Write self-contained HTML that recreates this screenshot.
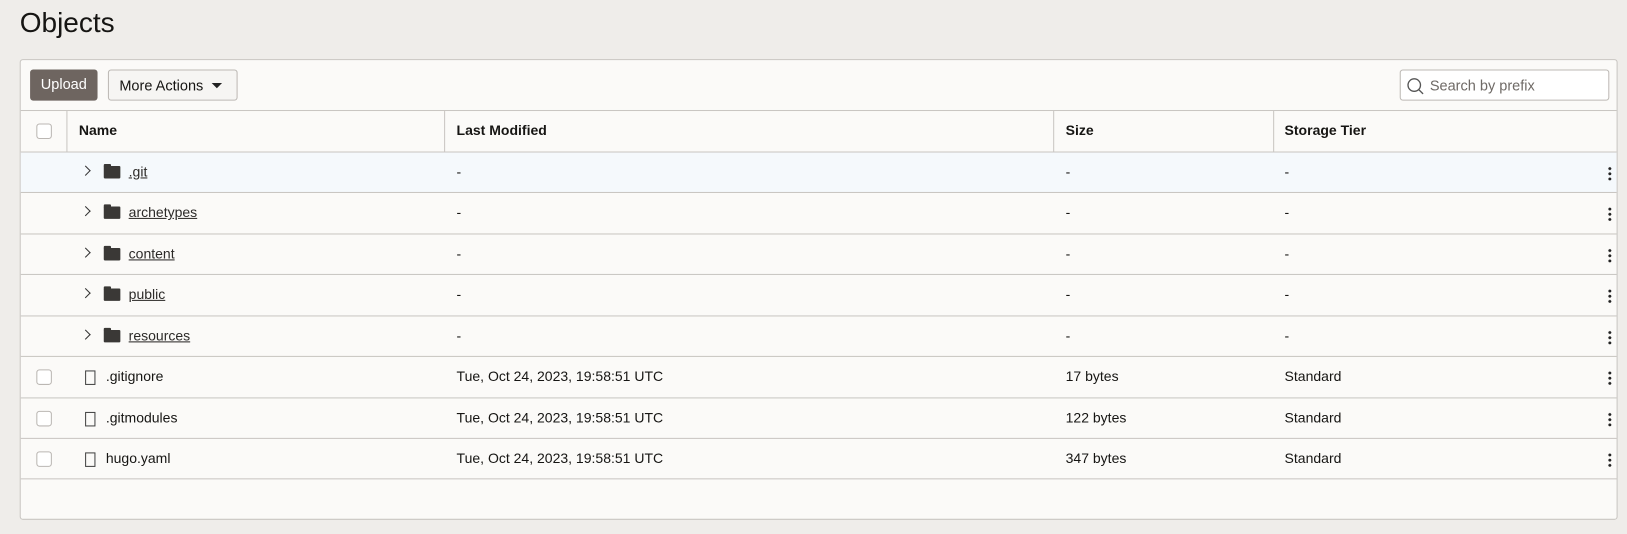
<!DOCTYPE html>
<html><head><style>
*{box-sizing:border-box;margin:0;padding:0}
html,body{width:1627px;height:534px;overflow:hidden}
body{background:#efedea;font-family:"Liberation Sans",sans-serif;color:#161513}
.wrap{position:absolute;left:0;top:0;width:1568px;height:515px;transform:scale(1.0376);transform-origin:0 0}
h1{position:absolute;left:19px;top:7px;font-size:27px;font-weight:400;color:#161513}
.panel{position:absolute;left:19px;top:57px;width:1540px;height:444px;background:#fbfaf8;border:1px solid #c9c6c2;border-radius:3px}
.btn{position:absolute;top:9px;height:30px;font-size:14px;line-height:28px;border-radius:3px}
.up{left:9px;width:65px;background:#6e6560;color:#fff;text-align:center}
.more{left:84px;width:125px;border:1px solid #bdb9b5;background:#f6f5f3;padding-left:10px}
.more:after{content:"";position:absolute;right:14px;top:12px;border-left:5px solid transparent;border-right:5px solid transparent;border-top:5px solid #222}
.search{position:absolute;left:1329px;top:9px;width:202px;height:30px;border:1px solid #bdb9b5;border-radius:3px;background:#fff;font-size:14px;color:#6f6a66;line-height:28px;padding-left:28px}
.search svg{position:absolute;left:5px;top:6px}
.row{position:absolute;left:0;width:1538px;height:40px;border-top:1px solid #c9c6c2;font-size:13.5px;line-height:38px}
.row span{position:absolute;top:0}
.hd{top:48px;font-weight:700}
.hd i{position:absolute;top:0;width:1px;height:39px;background:#c9c6c2}
.cb{position:absolute;left:15px;top:12px;width:15px;height:15px;border:1px solid #bbb7b3;border-radius:3px;background:#fff}
.c1{left:56px}.c2{left:420px}.c3{left:1007px}.c4{left:1218px}
.dots{position:absolute;left:1530px;top:13px;width:3px;height:14px;background:radial-gradient(circle,#222 1.3px,transparent 1.5px) 0 0/3px 5px repeat-y}
.chev{position:absolute;left:59px;top:14px;width:7px;height:7px;border-right:1.3px solid #333;border-top:1.3px solid #333;transform:rotate(45deg)}
.fold{position:absolute;left:80px;top:13px;width:16px;height:12px;background:#3a3836;border-radius:1px}
.fold:before{content:"";position:absolute;left:0;top:-2px;width:7px;height:3px;background:#3a3836;border-radius:1px 1px 0 0}
.fn{left:104px;text-decoration:underline;color:#2c2a28}
.file{position:absolute;left:62px;top:13px;width:10px;height:14px;border:1.2px solid #444}
.fl{left:82px}
</style></head><body><div class="wrap">
<h1>Objects</h1>
<div class="panel">
<div class="btn up">Upload</div>
<div class="btn more">More Actions</div>
<div class="search"><svg width="18" height="18" viewBox="0 0 18 18"><circle cx="8" cy="8" r="6" fill="none" stroke="#555" stroke-width="1.3"/><path d="M12.3 12.3L16.5 16.5" stroke="#555" stroke-width="1.3"/></svg>Search by prefix</div>
<div class="row hd"><div class="cb"></div><i style="left:44px"></i><span class="c1">Name</span><i style="left:408px"></i><span class="c2">Last Modified</span><i style="left:995px"></i><span class="c3">Size</span><i style="left:1207px"></i><span class="c4">Storage Tier</span></div>
<div class="row" style="top:88px;background:#f5f9fc"><div class="chev"></div><div class="fold"></div><span class="fn">.git</span><span class="c2">-</span><span class="c3">-</span><span class="c4">-</span><div class="dots"></div></div>
<div class="row" style="top:127px"><div class="chev"></div><div class="fold"></div><span class="fn">archetypes</span><span class="c2">-</span><span class="c3">-</span><span class="c4">-</span><div class="dots"></div></div>
<div class="row" style="top:167px"><div class="chev"></div><div class="fold"></div><span class="fn">content</span><span class="c2">-</span><span class="c3">-</span><span class="c4">-</span><div class="dots"></div></div>
<div class="row" style="top:206px"><div class="chev"></div><div class="fold"></div><span class="fn">public</span><span class="c2">-</span><span class="c3">-</span><span class="c4">-</span><div class="dots"></div></div>
<div class="row" style="top:246px"><div class="chev"></div><div class="fold"></div><span class="fn">resources</span><span class="c2">-</span><span class="c3">-</span><span class="c4">-</span><div class="dots"></div></div>
<div class="row" style="top:285px"><div class="cb"></div><div class="file"></div><span class="fl">.gitignore</span><span class="c2">Tue, Oct 24, 2023, 19:58:51 UTC</span><span class="c3">17 bytes</span><span class="c4">Standard</span><div class="dots"></div></div>
<div class="row" style="top:325px"><div class="cb"></div><div class="file"></div><span class="fl">.gitmodules</span><span class="c2">Tue, Oct 24, 2023, 19:58:51 UTC</span><span class="c3">122 bytes</span><span class="c4">Standard</span><div class="dots"></div></div>
<div class="row" style="top:364px;border-bottom:1px solid #c9c6c2;height:40px"><div class="cb"></div><div class="file"></div><span class="fl">hugo.yaml</span><span class="c2">Tue, Oct 24, 2023, 19:58:51 UTC</span><span class="c3">347 bytes</span><span class="c4">Standard</span><div class="dots"></div></div>
</div>
</div></body></html>
